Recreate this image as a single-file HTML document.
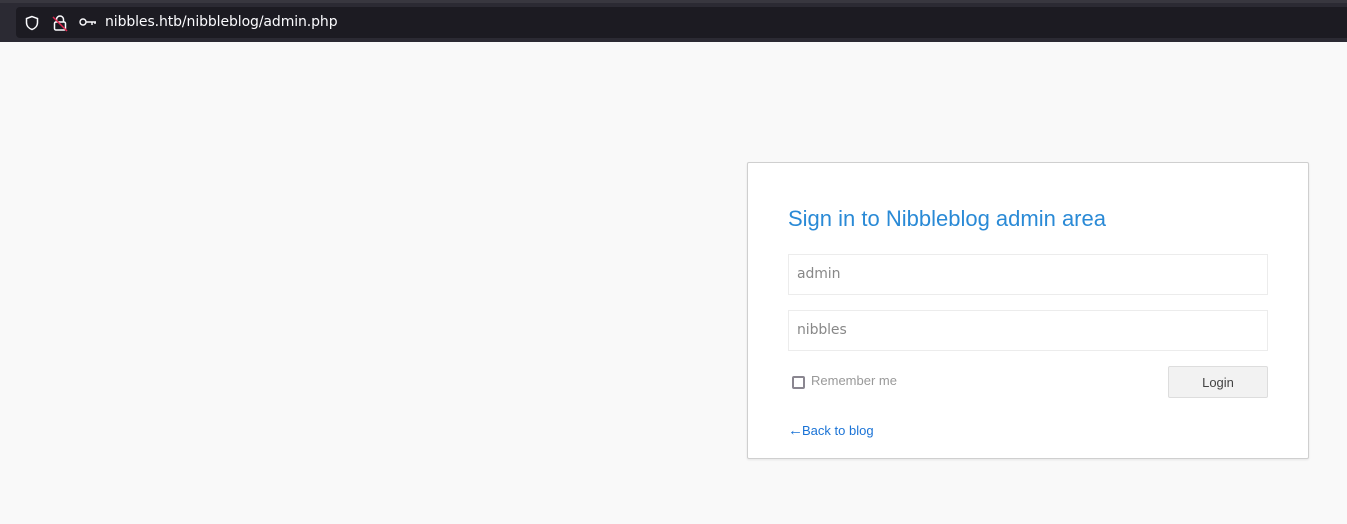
<!DOCTYPE html>
<html><head><style>
*{margin:0;padding:0;box-sizing:border-box}
body{width:1347px;height:524px;background:#f9f9f9;font-family:"Liberation Sans",sans-serif;position:relative;overflow:hidden}
.top{position:absolute;left:0;top:0;width:1347px;height:42px;background:#2b2a33;border-top:3px solid #38373f}
.url{position:absolute;left:16px;top:4px;width:1331px;height:31px;background:#1c1b22;border-radius:4px 0 0 4px}
.url span{position:absolute;left:89px;top:7px;color:#fbfbfe;font-family:"DejaVu Sans",sans-serif;font-size:14px;letter-spacing:-0.1px}
.card{position:absolute;left:747px;top:162px;width:562px;height:297px;background:#fff;border:1px solid #cfcfcf;border-radius:2px;box-shadow:0 1px 2px rgba(0,0,0,.08)}
h1{position:absolute;left:788px;top:206px;font-size:22px;font-weight:normal;color:#2a8ad6}
.in{position:absolute;left:788px;width:480px;height:41px;border:1px solid #ececec;background:#fff;font-family:"DejaVu Sans",sans-serif;font-size:14px;color:#888;padding:11px 0 0 8px;letter-spacing:-0.1px}
.cb{position:absolute;left:792px;top:376px;width:13px;height:13px;border:2px solid #8a8690;border-radius:2px}
.rm{position:absolute;left:811px;top:373px;font-size:13px;color:#999}
.btn{position:absolute;left:1168px;top:366px;width:100px;height:32px;background:#f2f2f2;border:1px solid #ddd;border-radius:2px;font-size:13px;color:#444;text-align:center;line-height:31px}
.bk{position:absolute;left:788px;top:422px;font-size:13px;color:#1a73d6}
</style></head><body>
<div class="top"><div class="url">
<svg style="position:absolute;left:8px;top:8px" width="16" height="16" viewBox="0 0 16 16"><path d="M8 1.5L2.5 3.5v4c0 3.5 2.5 6 5.5 7 3-1 5.5-3.5 5.5-7v-4z" fill="none" stroke="#fbfbfe" stroke-width="1.5"/></svg>
<svg style="position:absolute;left:36px;top:7px" width="16" height="18" viewBox="0 0 16 18"><path d="M4.5 8V5.5a3.5 3.5 0 0 1 7 0V8" fill="none" stroke="#fbfbfe" stroke-width="1.5"/><rect x="2.5" y="8" width="11" height="8" rx="1.5" fill="none" stroke="#fbfbfe" stroke-width="1.5"/><path d="M1 3L15 17" stroke="#e22850" stroke-width="1.5"/></svg>
<svg style="position:absolute;left:63px;top:9px" width="18" height="12" viewBox="0 0 18 12"><circle cx="4" cy="6" r="3" fill="none" stroke="#fbfbfe" stroke-width="1.4"/><path d="M7 6h10M13 6v3M16 6v2" stroke="#fbfbfe" stroke-width="1.4" fill="none"/></svg>
<span>nibbles.htb/nibbleblog/admin.php</span></div></div>
<div class="card"></div>
<h1>Sign in to Nibbleblog admin area</h1>
<div class="in" style="top:254px">admin</div>
<div class="in" style="top:310px">nibbles</div>
<div class="cb"></div><div class="rm">Remember me</div>
<div class="btn">Login</div>
<div class="bk"><span style="font-size:15px;letter-spacing:-1px">←</span>Back to blog</div>
</body></html>
